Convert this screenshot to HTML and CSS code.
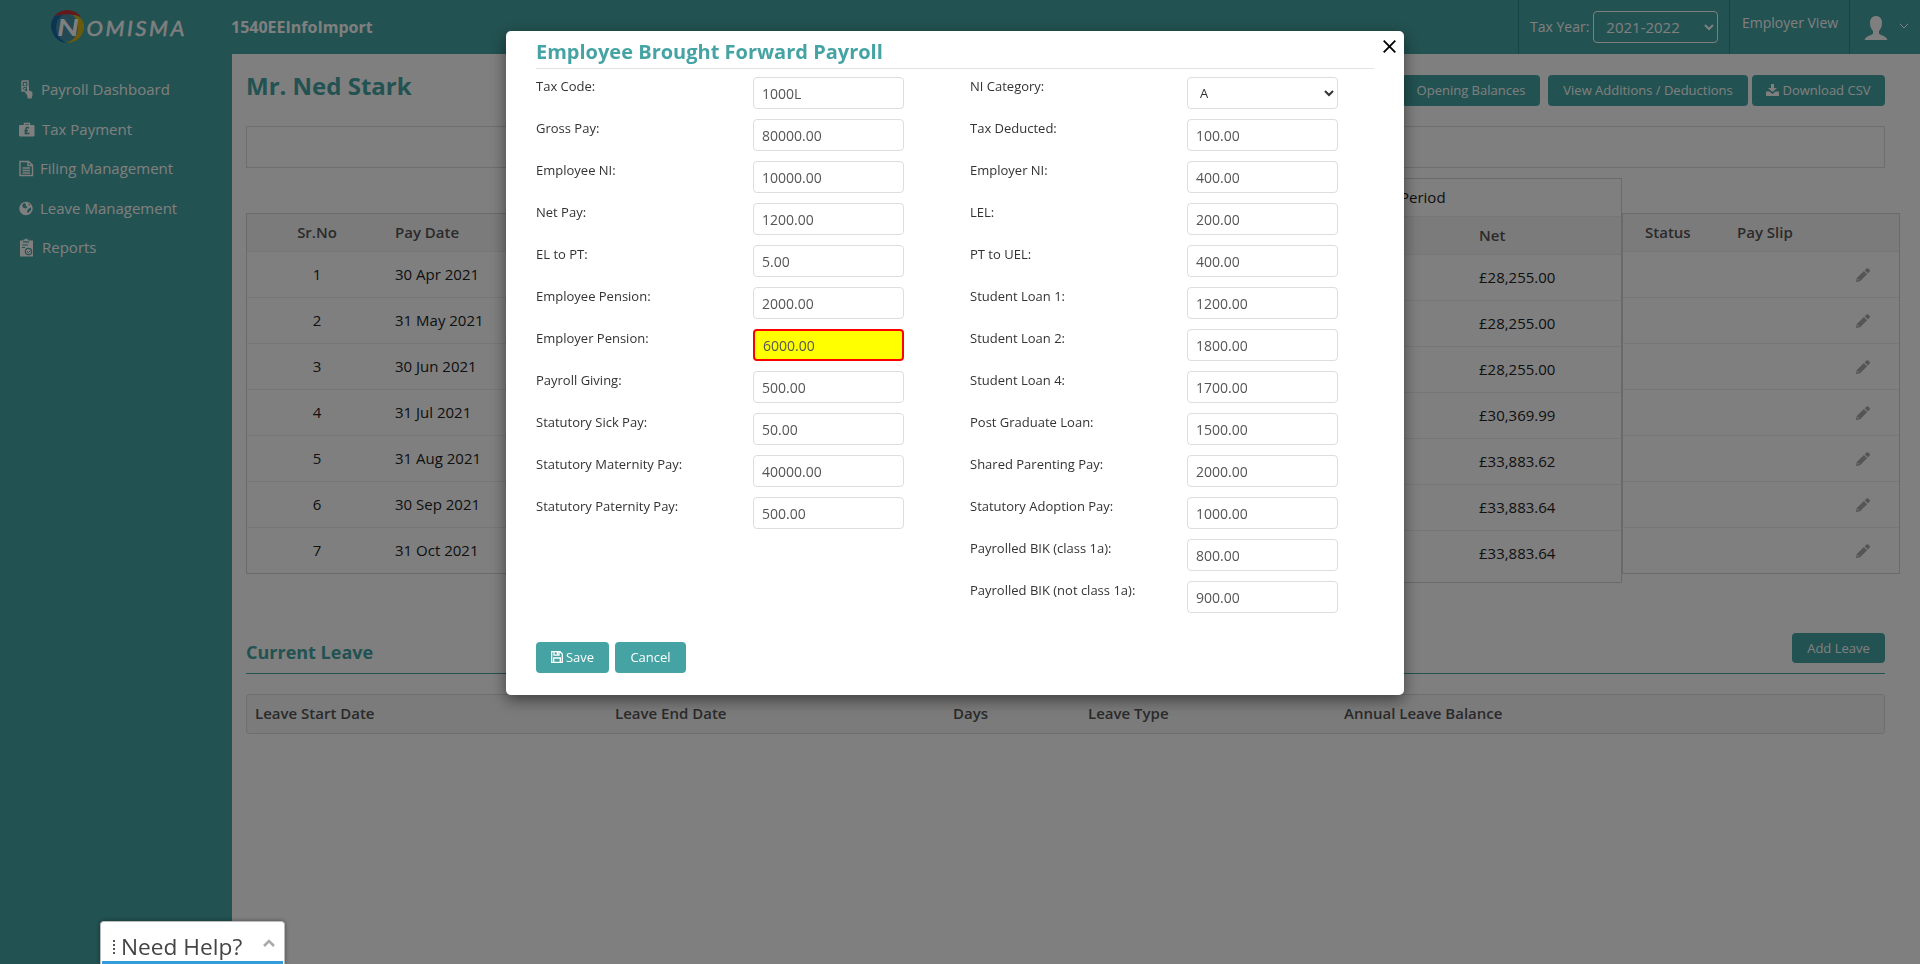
FILE: index.html
```html
<!DOCTYPE html>
<html lang="en">
<head>
<meta charset="utf-8">
<title>Nomisma Payroll</title>
<link rel="stylesheet" href="styles.css">
</head>
<body>
<div class="app">
  <header class="topbar">
    <div class="brand">
      <svg width="138" height="36" viewBox="0 0 138 36">
        <circle cx="17.500" cy="18.500" r="13" fill="#4592a6"/>
        <path d="M5 7.500Q10 1 18 1Q27 1 32 8Q26 5 19 5.500Q11 5 5 7.500Z" fill="#c8323a"/>
        <path d="M5 7.500A17 17 0 0 0 19 34Q7 30 7 18Q8 9 14 6Q9 5.500 5 7.500Z" fill="#1c68a8"/>
        <path d="M24 6Q32 6 35 15A17 17 0 0 1 17 34Q29 30 29 18Q29 10 24 6Z" fill="#d4b41c"/>
        <text class="logo-n" x="8" y="26.500" textLength="22" lengthAdjust="spacingAndGlyphs">N</text>
        <text class="logo-rest" x="37.500" y="26.500" textLength="98">OMISMA</text>
      </svg>
    </div>
    <div class="company">1540EEInfoImport</div>
    <div class="tax-year"><span>Tax Year:</span><select class="year-select"><option>2021-2022</option></select></div>
    <div class="employer-view">Employer View</div>
    <div class="account">
      <svg width="24" height="24" viewBox="0 0 24 24"><path fill="#fff" d="M12 0C8 0 6 3 6 7c0 4 1.500 6 3 8v2.500C8 19.500 2 19.500 .5 24h23C22 19.500 16 19.500 15 17.500V15c1.500-2 3-4 3-8 0-4-2-7-6-7z"/></svg>
      <svg width="10" height="6" viewBox="0 0 10 6"><path d="M.8 .8L5 5 9.200 .8" fill="none" stroke="#fff"/></svg>
    </div>
  </header>
  <div class="body">
    <nav class="sidebar">
      <a class="nav-item"><svg width="16" height="19" viewBox="0 0 16 19"><path d="M3 1h6v7M3 1v10h3" fill="none" stroke="#fff" stroke-width="1.400"/><circle cx="6" cy="4" r="1.300" fill="#fff"/><path d="M3 8q3-3 4.500-1M4 10l3-2" fill="none" stroke="#fff" stroke-width="1.200"/><path fill="#fff" d="M8 6q1.500-1 2 1v3.500l3.200 1.200 .3 3.300-1 3.500H8.800L8 15l-2.500-3.500q.5-1.300 1.700-.5l.8 1z"/></svg><span class="lbl-1">Payroll Dashboard</span></a>
      <a class="nav-item"><svg width="16" height="19" viewBox="0 0 16 19"><path d="M5.500 6V3.500h5V6" fill="none" stroke="#fff" stroke-width="1.400"/><rect x="0" y="5" width="15.500" height="11.500" rx="1.200" fill="#fff"/><path d="M10 8q-3-1.500-3 1v2.500q0 2-1.500 2H10.500M5.300 10.700H9" fill="none" stroke="#45a4a3" stroke-width="1.500"/></svg><span class="lbl-2">Tax Payment</span></a>
      <a class="nav-item"><svg width="16" height="19" viewBox="0 0 16 19"><path d="M1 2.500h8.500l4 3.500v10.500H1zM9 3v3.500h4M3.500 9h7.500M3.500 11.500h7.500M3.500 14h7.500" fill="none" stroke="#fff" stroke-width="1.400"/></svg><span>Filing Management</span></a>
      <a class="nav-item"><svg width="16" height="19" viewBox="0 0 16 19"><circle cx="7" cy="9.500" r="6.700" fill="#fff"/><path fill="#45a4a3" d="M3 6.500l2-2.500 2 1-.5 1.500 2 1.500-1.500 1.500-2.500-.5zM9 10l3-1.500v2.500l-3 3-1-1.500zM9.500 4.500l1.700 1.200L10 7z"/></svg><span>Leave Management</span></a>
      <a class="nav-item"><svg width="16" height="19" viewBox="0 0 16 19"><path fill="#fff" d="M1 2.500h3.500V1.500H6l1-1.500 1 1.500h1.500v1H14v16H1z"/><path d="M4 3.900h6M3 7h6M3 9.500h3" stroke="#45a4a3" stroke-width="1.100"/><circle cx="9.500" cy="13.500" r="3.200" fill="none" stroke="#45a4a3" stroke-width="1.200"/><path d="M8 13.500l1.500 1 2-2" fill="none" stroke="#45a4a3"/></svg><span class="lbl-2">Reports</span></a>
    </nav>
    <main class="content">
      <div class="title-row">
        <h1 class="employee">Mr. Ned Stark</h1>
        <div class="actions">
          <button class="btn btn-open">Opening Balances</button>
          <button class="btn btn-view">View Additions / Deductions</button>
          <button class="btn btn-csv"><svg width="13" height="12" viewBox="0 0 13 12"><path fill="#fff" d="M5 0h3v4h3L6.500 8 2 4h3zM0 7.500h3.500L6.500 10l3-2.500H13V12H0z"/></svg>Download CSV</button>
        </div>
      </div>
      <div class="summary"></div>
      <div class="tables">
        <div class="table dates">
          <div class="row head"><span>Sr.No</span><span>Pay Date</span></div>
          <div class="row"><span>1</span><span>30 Apr 2021</span></div>
          <div class="row"><span>2</span><span>31 May 2021</span></div>
          <div class="row"><span>3</span><span>30 Jun 2021</span></div>
          <div class="row"><span>4</span><span>31 Jul 2021</span></div>
          <div class="row"><span>5</span><span>31 Aug 2021</span></div>
          <div class="row"><span>6</span><span>30 Sep 2021</span></div>
          <div class="row"><span>7</span><span>31 Oct 2021</span></div>
        </div>
        <div class="table amounts">
          <div class="period">Period</div>
          <div class="row head"><span>Net</span></div>
          <div class="row"><span>£28,255.00</span></div>
          <div class="row"><span>£28,255.00</span></div>
          <div class="row"><span>£28,255.00</span></div>
          <div class="row"><span>£30,369.99</span></div>
          <div class="row"><span>£33,883.62</span></div>
          <div class="row"><span>£33,883.64</span></div>
          <div class="row"><span>£33,883.64</span></div>
        </div>
        <div class="table slips">
          <div class="row head"><span>Status</span><span>Pay Slip</span></div>
          <div class="row"><svg class="pencil" viewBox="0 0 14 14"><use href="#pencil"/></svg></div>
          <div class="row"><svg class="pencil" viewBox="0 0 14 14"><use href="#pencil"/></svg></div>
          <div class="row"><svg class="pencil" viewBox="0 0 14 14"><use href="#pencil"/></svg></div>
          <div class="row"><svg class="pencil" viewBox="0 0 14 14"><use href="#pencil"/></svg></div>
          <div class="row"><svg class="pencil" viewBox="0 0 14 14"><use href="#pencil"/></svg></div>
          <div class="row"><svg class="pencil" viewBox="0 0 14 14"><use href="#pencil"/></svg></div>
          <div class="row"><svg class="pencil" viewBox="0 0 14 14"><use href="#pencil"/></svg></div>
        </div>
      </div>
      <div class="leave-bar"><h2 class="leave-title">Current Leave</h2><button class="btn btn-leave">Add Leave</button></div>
      <div class="leave-head"><span>Leave Start Date</span><span>Leave End Date</span><span>Days</span><span>Leave Type</span><span>Annual Leave Balance</span></div>
    </main>
  </div>
</div>
<svg class="defs" width="0" height="0"><defs><path id="pencil" fill="#aaa" fill-rule="evenodd" d="M8.700 2.200l1.900-1.800q.8-.6 1.500 0l1.600 1.600q.6.700 0 1.500L11.900 5.400zM7.900 3L11.100 6.200 4.100 13.200 .2 13.900 0 13.700 .8 9.900zM1.800 11l-.3 1.400 1.500-.3v-.8h-.8z"/></defs></svg>
<div class="overlay">
  <section class="modal">
    <svg class="close" width="13" height="13" viewBox="0 0 13 13"><path d="M.7 .7l11.600 11.600M12.300 .7L.7 12.300" stroke="#000" stroke-width="1.800"/></svg>
    <h2 class="modal-title">Employee Brought Forward Payroll</h2>
    <div class="form">
      <div class="col">
        <label class="field"><span>Tax Code:</span><input value="1000L"></label>
        <label class="field"><span>Gross Pay:</span><input value="80000.00"></label>
        <label class="field"><span>Employee NI:</span><input value="10000.00"></label>
        <label class="field"><span>Net Pay:</span><input value="1200.00"></label>
        <label class="field"><span>EL to PT:</span><input value="5.00"></label>
        <label class="field"><span>Employee Pension:</span><input value="2000.00"></label>
        <label class="field"><span>Employer Pension:</span><input class="flagged" value="6000.00"></label>
        <label class="field"><span>Payroll Giving:</span><input value="500.00"></label>
        <label class="field"><span>Statutory Sick Pay:</span><input value="50.00"></label>
        <label class="field"><span>Statutory Maternity Pay:</span><input value="40000.00"></label>
        <label class="field"><span>Statutory Paternity Pay:</span><input value="500.00"></label>
      </div>
      <div class="col">
        <label class="field"><span>NI Category:</span><select class="ni"><option>A</option></select></label>
        <label class="field"><span>Tax Deducted:</span><input value="100.00"></label>
        <label class="field"><span>Employer NI:</span><input value="400.00"></label>
        <label class="field"><span>LEL:</span><input value="200.00"></label>
        <label class="field"><span>PT to UEL:</span><input value="400.00"></label>
        <label class="field"><span>Student Loan 1:</span><input value="1200.00"></label>
        <label class="field"><span>Student Loan 2:</span><input value="1800.00"></label>
        <label class="field"><span>Student Loan 4:</span><input value="1700.00"></label>
        <label class="field"><span>Post Graduate Loan:</span><input value="1500.00"></label>
        <label class="field"><span>Shared Parenting Pay:</span><input value="2000.00"></label>
        <label class="field"><span>Statutory Adoption Pay:</span><input value="1000.00"></label>
        <label class="field"><span>Payrolled BIK (class 1a):</span><input value="800.00"></label>
        <label class="field"><span>Payrolled BIK (not class 1a):</span><input value="900.00"></label>
      </div>
    </div>
    <div class="modal-actions">
      <button class="btn btn-save"><svg width="12" height="12" viewBox="0 0 12 12"><path fill="none" stroke="#fff" stroke-width="1.300" d="M.7 .7h8.300l2.300 2.300v8.300H.7zM3 .7v3.500h5V.7M2.700 11V7h6.600v4"/><path fill="#fff" d="M5.700 .7h1.600v3H5.700z"/></svg>Save</button>
      <button class="btn btn-cancel">Cancel</button>
    </div>
  </section>
</div>
<aside class="help"><span class="dots"><i></i><i></i><i></i><i></i></span><span class="help-text">Need Help?</span><svg width="12" height="8" viewBox="0 0 12 8"><path d="M1 7l5-5 5 5" fill="none" stroke="#aaa" stroke-width="2.600"/></svg></aside>
</body>
</html>
```
FILE: styles.css
```css
* { box-sizing: border-box; }
body { margin: 0; height: 964px; overflow: hidden; background: #fff; color: #333; font: 15px/20px "Open Sans", "Noto Sans", sans-serif; }
h1, h2 { margin: 0; }
input, select, button { font-family: inherit; }
svg { flex: none; }
.app { height: 964px; display: flex; flex-direction: column; }
.defs { position: absolute; }

.topbar { height: 54px; flex: none; display: flex; background: #45a4a3; color: #fff; }
.brand { width: 231px; padding: 9px 0 0 49px; }
.logo-n, .logo-rest { fill: #fff; font-family: Lato, sans-serif; font-style: italic; font-weight: 700; }
.logo-n { font-size: 23px; }
.logo-rest { font-size: 22px; font-weight: 400; stroke: #fff; stroke-width: .5px; }
.company { flex: 1; padding-top: 17px; font-size: 16px; font-weight: 700; }
.tax-year { width: 211px; height: 54px; padding: 11px 0 0 11px; display: flex; gap: 4px; border-left: 1px solid #2f8887; }
.tax-year span { padding-top: 6px; font-size: 14px; }
.year-select { width: 125px; height: 32px; padding: 0 8px; border: 1px solid #fff; border-radius: 4px; background: transparent; color: #fff; font-size: 15px; }
.employer-view { width: 121px; padding: 13px 0 0 12px; font-size: 14px; height: 54px; border-left: 1px solid #2f8887; border-right: 1px solid #2f8887; }
.account { width: 70px; padding: 16px 0 0 14px; display: flex; gap: 11px; }
.account svg:last-child { margin-top: 7px; }

.body { flex: 1; display: flex; min-height: 0; }
.sidebar { width: 232px; background: #45a4a3; padding: 26px 0 0 19px; display: flex; flex-direction: column; gap: 20.500px; }
.nav-item { height: 19px; display: flex; gap: 5px; align-items: center; color: #fff; font-size: 15px; }
.nav-item span { padding-bottom: 1px; }
.nav-item .lbl-1 { padding-left: 1px; }
.nav-item .lbl-2 { padding-left: 2px; }
.content { flex: 1; padding: 0 0 0 14px; min-width: 0; }
.title-row { width: 1639px; height: 72px; display: flex; justify-content: space-between; }
.employee { padding-top: 16px; font-size: 24px; line-height: 31px; font-weight: 700; color: #45a4a3; }
.actions { display: flex; padding-top: 21px; }
.btn { height: 31px; border: 0; border-radius: 4px; background: #45a4a3; color: #fff; font-size: 13px; padding: 0 0 2px; display: flex; align-items: center; justify-content: center; gap: 3px; }
.btn-open { width: 138px; margin-right: 8px; }
.btn-view { width: 200px; margin-right: 4px; }
.btn-csv { width: 133px; }
.summary { width: 1639px; height: 42px; border: 1px solid #ddd; }
.tables { display: flex; align-items: flex-start; padding-top: 10px; height: 455px; }
.table { border: 1px solid #d4d4d4; color: #222; }
.row { height: 46px; border-bottom: 1px solid #ececec; display: flex; align-items: center; }
.row span { padding-bottom: 2px; }
.row:last-child { border-bottom: 0; }
.head { height: 38px; background: #f7f7f7; font-weight: 600; color: #555; }
.dates { width: 700px; height: 361px; margin-top: 35px; border-right: 0; }
.dates .row span:first-child { width: 140px; text-align: center; }
.dates .row span:last-child { margin-left: 8px; }
.amounts { width: 676px; height: 405px; }
.period { height: 38px; padding: 8px 0 0 453px; border-bottom: 1px solid #ececec; }
.amounts .row span { margin-left: 532px; }
.slips { width: 278px; height: 361px; margin-top: 35px; }
.slips .head span:first-child { width: 92px; margin-left: 22px; }
.pencil { width: 14px; height: 14px; margin-left: 233px; }
.leave-bar { width: 1639px; height: 51px; display: flex; justify-content: space-between; border-bottom: 1px solid #45a4a3; }
.leave-title { padding-top: 17px; font-size: 18px; line-height: 24px; font-weight: 700; color: #45a4a3; }
.btn-leave { width: 93px; height: 30px; margin-top: 10px; padding-bottom: 0; }
.leave-head { width: 1639px; height: 40px; margin-top: 20px; border: 1px solid #ddd; border-radius: 3px; background: #f7f7f7; display: grid; grid-template-columns: 360px 338px 135px 256px 1fr; align-items: center; padding: 0 0 2px 8px; font-weight: 600; color: #555; }

.overlay { position: fixed; inset: 0; background: rgba(0, 0, 0, .5); padding: 31px 0 0 506px; }
.modal { position: relative; width: 898px; height: 664px; padding: 7px 30px 0; background: #fff; border-radius: 5px; box-shadow: 0 5px 15px rgba(0, 0, 0, .5); }
.close { position: absolute; right: 8px; top: 9px; }
.modal-title { height: 31px; font-size: 20px; line-height: 28px; font-weight: 700; color: #45a4a3; border-bottom: 1px solid #e2e2e2; }
.form { height: 565px; padding-top: 8px; display: flex; gap: 66px; }
.col { width: 368px; }
.field { height: 42px; display: flex; justify-content: space-between; font-size: 13px; line-height: 18px; }
.field input, .field select { width: 151px; height: 32px; border: 1px solid #ddd; border-radius: 4px; padding: 0 8px; color: #555; font-size: 14px; background: #fff; }
.field input.flagged { border: 2px solid red; background: #ff0; }
.field .ni { padding: 0 8px; font-size: 13px; color: #333; }
.modal-actions { display: flex; gap: 6px; margin-top: 8px; }
.btn-save { width: 73px; }
.btn-cancel { width: 71px; }

.help { position: fixed; left: 100px; bottom: 0; width: 185px; height: 43px; padding: 0 9px 0 12px; display: flex; border: 1px solid #bbb; border-bottom: 0; border-radius: 4px 4px 0 0; box-shadow: 0 0 4px rgba(0, 0, 0, .4); background: linear-gradient(#349bdc, #349bdc) 1px 100% / 181px 3px no-repeat #fff; }
.dots { width: 8px; padding-top: 18px; display: flex; flex-direction: column; gap: 2px; }
.dots i { width: 2px; height: 2px; background: #555; }
.help-text { flex: 1; padding-top: 11px; font-size: 22.700px; line-height: 28px; color: #444; }
.help svg { margin-top: 17px; }
```
